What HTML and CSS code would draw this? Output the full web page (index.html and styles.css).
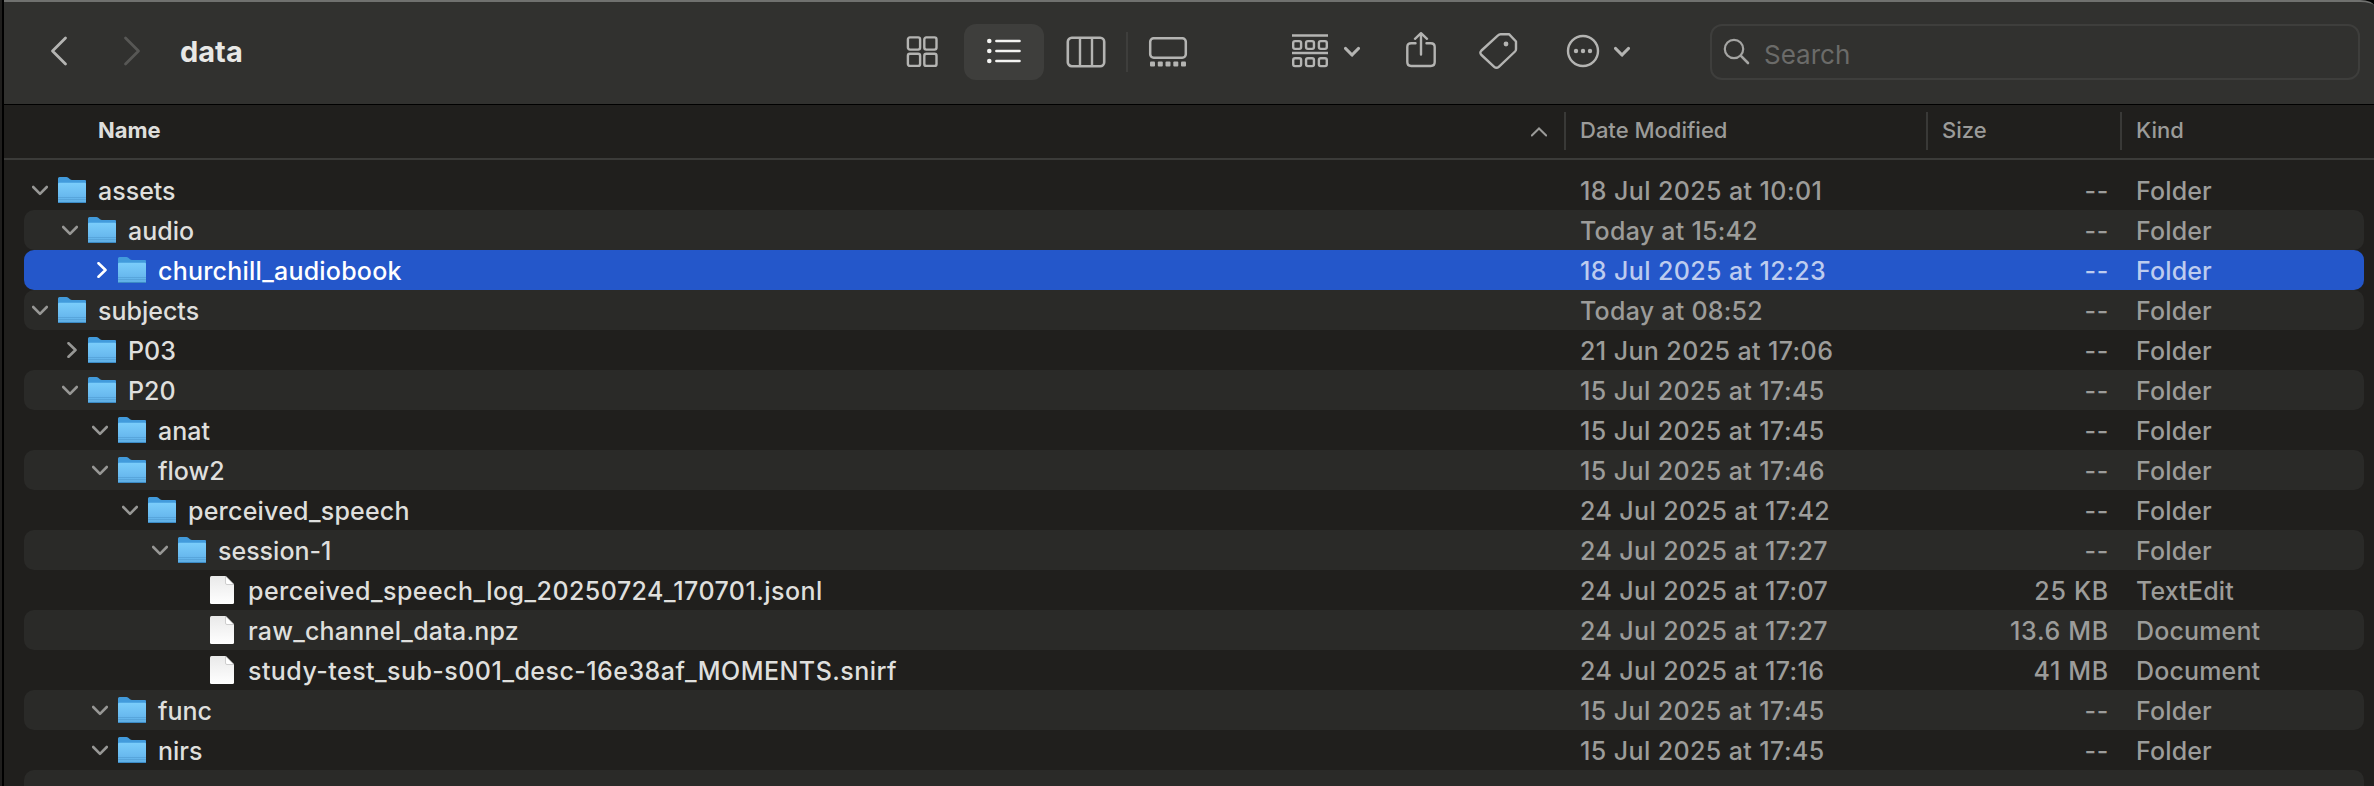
FILE: index.html
```html
<!DOCTYPE html>
<html lang="en">
<head>
<meta charset="utf-8">
<title>data</title>
<link rel="stylesheet" href="styles.css">
</head>
<body>
<svg class="defs" width="0" height="0" aria-hidden="true">
  <defs>
    <linearGradient id="folder-front" x1="0" y1="0" x2="0" y2="1"><stop offset="0" stop-color="#7bcdfb"/><stop offset=".7" stop-color="#67b8ee"/><stop offset="1" stop-color="#5eaee4"/></linearGradient>
    <linearGradient id="page-fill" x1="0" y1="0" x2="0" y2="1"><stop offset="0" stop-color="#e9e9e9"/><stop offset="1" stop-color="#fff"/></linearGradient>
  </defs>
  <symbol id="down" viewBox="0 0 16 16"><path d="M1.200 5 8 11.800 14.800 5" fill="none" stroke="currentColor" stroke-width="2.600" stroke-linecap="round" stroke-linejoin="round"/></symbol>
  <symbol id="right" viewBox="0 0 16 16"><path d="M6.500 1.200 13.500 8 6.500 14.800" fill="none" stroke="currentColor" stroke-width="2.600" stroke-linecap="round" stroke-linejoin="round"/></symbol>
  <symbol id="folder" viewBox="0 0 28 27"><path d="M0 1.500Q0 0 1.500 0H8.500Q9.500 0 10.300 .7L12 2.200Q12.800 3 14 3H27Q28 3 28 4V12H0Z" fill="#429bdc"/><path d="M0 6.800Q0 5.700 1.200 5.700H26.800Q28 5.700 28 6.800V25Q28 26 27 26H1Q0 26 0 25Z" fill="url(#folder-front)"/><path d="M0 20.500H28M0 22.500H28" stroke="#529fd4" stroke-width=".7"/><path d="M.2 25.500H27.800" stroke="#3b8bc6" stroke-width="1"/></symbol>
  <symbol id="page" viewBox="0 0 24 28"><path d="M1.500 0H15.500L24 8.500V26.500Q24 28 22.500 28H1.500Q0 28 0 26.500V1.500Q0 0 1.500 0Z" fill="url(#page-fill)"/><path d="M15.500 0V7Q15.500 8.500 17 8.500H24Z" fill="#fff" stroke="#bbb" stroke-width=".7"/></symbol>
</svg>
<div class="window">
  <header class="toolbar">
    <div class="nav">
      <svg class="back" width="20" height="32" viewBox="0 0 20 32"><path d="M16.500 3 3.500 16 16.500 29" /></svg>
      <svg class="forward" width="20" height="32" viewBox="0 0 20 32"><path d="M2.500 3 15.500 16 2.500 29" /></svg>
      <h1>data</h1>
    </div>
    <div class="views">
      <span class="view"><svg width="32" height="32" viewBox="0 0 32 32"><g fill="none" stroke="currentColor" stroke-width="2.400"><rect x="1.900" y="1.400" width="12.200" height="12.200" rx="2"/><rect x="18.300" y="1.400" width="12.200" height="12.200" rx="2"/><rect x="1.900" y="17.700" width="12.200" height="12.200" rx="2"/><rect x="18.300" y="17.700" width="12.200" height="12.200" rx="2"/></g></svg></span>
      <span class="view active"><svg width="34" height="26" viewBox="0 0 34 26"><g fill="currentColor"><circle cx="2.300" cy="3" r="2.300"/><circle cx="2.300" cy="13" r="2.300"/><circle cx="2.300" cy="23" r="2.300"/></g><path d="M9.400 3H32.500M9.400 13H32.500M9.400 23H32.500" stroke="currentColor" stroke-width="2.600" stroke-linecap="round"/></svg></span>
      <span class="view"><svg width="40" height="32" viewBox="0 0 40 32"><g fill="none" stroke="currentColor"><rect x="1.800" y="1.800" width="36.400" height="28.400" rx="4" stroke-width="2.600"/><path d="M14 2V30M26 2V30" stroke-width="2.400"/></g></svg></span>
      <span class="view gallery"><svg width="40" height="30" viewBox="0 0 40 30"><rect x="2.200" y="1.300" width="35.600" height="19.400" rx="3.500" fill="none" stroke="currentColor" stroke-width="2.500"/><g fill="currentColor"><rect x="2" y="24.500" width="5" height="5" rx="1"/><rect x="9.800" y="24.500" width="5" height="5" rx="1"/><rect x="17.500" y="24.500" width="5" height="5" rx="1"/><rect x="25.300" y="24.500" width="5" height="5" rx="1"/><rect x="33" y="24.500" width="5" height="5" rx="1"/></g></svg></span>
    </div>
    <div class="actions">
      <svg width="36" height="34" viewBox="0 0 36 34"><g fill="none" stroke="currentColor" stroke-width="2.400"><path d="M0 1.500H36M0 19H36"/><rect x="1.200" y="7.100" width="7.900" height="7.800" rx="1.800"/><rect x="14.050" y="7.100" width="7.900" height="7.800" rx="1.800"/><rect x="26.900" y="7.100" width="7.900" height="7.800" rx="1.800"/><rect x="1.200" y="24.300" width="7.900" height="7.800" rx="1.800"/><rect x="14.050" y="24.300" width="7.900" height="7.800" rx="1.800"/><rect x="26.900" y="24.300" width="7.900" height="7.800" rx="1.800"/></g></svg>
      <svg class="menu-arrow" width="16" height="12" viewBox="0 0 16 12"><path d="M1.600 2.500 8 9 14.400 2.500"/></svg>
      <svg class="share" width="30" height="36" viewBox="0 0 30 36"><g fill="none" stroke="currentColor" stroke-width="2.400" stroke-linecap="round" stroke-linejoin="round"><path d="M9.500 11.200H5.200Q1.300 11.200 1.300 15V30Q1.300 34 5.200 34H24.800Q28.700 34 28.700 30V15Q28.700 11.200 24.800 11.200H20.500"/><path d="M15 22.500V1.500M9 6.800 15 1.200 21 6.800"/></g></svg>
      <svg class="tag" width="40" height="38" viewBox="0 0 40 38"><path d="M21.500 2.200H30L37 9.500V17.300Q37 18.500 36 19.500L19.800 34.800Q17.500 36.900 15.200 34.800L2.500 23Q.2 20.800 2.500 18.500L19 3.400Q20.200 2.200 21.500 2.200Z" fill="none" stroke="currentColor" stroke-width="2.400" stroke-linejoin="round"/><circle cx="27" cy="12" r="2.400" fill="currentColor"/></svg>
      <svg class="more" width="34" height="34" viewBox="0 0 34 34"><circle cx="17" cy="17" r="15" fill="none" stroke="currentColor" stroke-width="2.400"/><g fill="currentColor"><circle cx="10" cy="17" r="2.200"/><circle cx="17" cy="17" r="2.200"/><circle cx="24" cy="17" r="2.200"/></g></svg>
      <svg class="menu-arrow last" width="16" height="12" viewBox="0 0 16 12"><path d="M1.600 2.500 8 9 14.400 2.500"/></svg>
    </div>
    <div class="search"><svg width="28" height="28" viewBox="0 0 28 28"><g fill="none" stroke="currentColor" stroke-width="2.200" stroke-linecap="round"><circle cx="11" cy="11" r="9.200"/><path d="M17.700 17.700 25 25" stroke-width="2.600"/></g></svg><span>Search</span></div>
  </header>
  <div class="columns">
    <div class="head name"><b>Name</b><svg class="sort" width="16" height="10" viewBox="0 0 16 10"><path d="M.8 8.500 8 1.500 15.200 8.500"/></svg></div>
    <div class="head date">Date Modified</div>
    <div class="head size">Size</div>
    <div class="head kind">Kind</div>
  </div>
  <main class="rows">
    <div class="row"><div class="item d0"><svg class="arrow"><use href="#down"/></svg><svg class="folder"><use href="#folder"/></svg><span>assets</span></div><span class="when">18 Jul 2025 at 10:01</span><span class="bytes">--</span><span class="type">Folder</span></div>
    <div class="row"><div class="item d1"><svg class="arrow"><use href="#down"/></svg><svg class="folder"><use href="#folder"/></svg><span>audio</span></div><span class="when today">Today at 15:42</span><span class="bytes">--</span><span class="type">Folder</span></div>
    <div class="row selected"><div class="item d2 long"><svg class="arrow"><use href="#right"/></svg><svg class="folder"><use href="#folder"/></svg><span>churchill_audiobook</span></div><span class="when">18 Jul 2025 at 12:23</span><span class="bytes">--</span><span class="type">Folder</span></div>
    <div class="row"><div class="item d0"><svg class="arrow"><use href="#down"/></svg><svg class="folder"><use href="#folder"/></svg><span>subjects</span></div><span class="when today">Today at 08:52</span><span class="bytes">--</span><span class="type">Folder</span></div>
    <div class="row"><div class="item d1"><svg class="arrow"><use href="#right"/></svg><svg class="folder"><use href="#folder"/></svg><span>P03</span></div><span class="when">21 Jun 2025 at 17:06</span><span class="bytes">--</span><span class="type">Folder</span></div>
    <div class="row"><div class="item d1"><svg class="arrow"><use href="#down"/></svg><svg class="folder"><use href="#folder"/></svg><span>P20</span></div><span class="when">15 Jul 2025 at 17:45</span><span class="bytes">--</span><span class="type">Folder</span></div>
    <div class="row"><div class="item d2"><svg class="arrow"><use href="#down"/></svg><svg class="folder"><use href="#folder"/></svg><span>anat</span></div><span class="when">15 Jul 2025 at 17:45</span><span class="bytes">--</span><span class="type">Folder</span></div>
    <div class="row"><div class="item d2"><svg class="arrow"><use href="#down"/></svg><svg class="folder"><use href="#folder"/></svg><span>flow2</span></div><span class="when">15 Jul 2025 at 17:46</span><span class="bytes">--</span><span class="type">Folder</span></div>
    <div class="row"><div class="item d3 long"><svg class="arrow"><use href="#down"/></svg><svg class="folder"><use href="#folder"/></svg><span>perceived_speech</span></div><span class="when">24 Jul 2025 at 17:42</span><span class="bytes">--</span><span class="type">Folder</span></div>
    <div class="row"><div class="item d4"><svg class="arrow"><use href="#down"/></svg><svg class="folder"><use href="#folder"/></svg><span>session-1</span></div><span class="when">24 Jul 2025 at 17:27</span><span class="bytes">--</span><span class="type">Folder</span></div>
    <div class="row"><div class="item d5 longest"><svg class="page"><use href="#page"/></svg><span>perceived_speech_log_20250724_170701.jsonl</span></div><span class="when">24 Jul 2025 at 17:07</span><span class="bytes">25 KB</span><span class="type">TextEdit</span></div>
    <div class="row"><div class="item d5 long"><svg class="page"><use href="#page"/></svg><span>raw_channel_data.npz</span></div><span class="when">24 Jul 2025 at 17:27</span><span class="bytes">13.6 MB</span><span class="type">Document</span></div>
    <div class="row"><div class="item d5 longest"><svg class="page"><use href="#page"/></svg><span>study-test_sub-s001_desc-16e38af_MOMENTS.snirf</span></div><span class="when">24 Jul 2025 at 17:16</span><span class="bytes">41 MB</span><span class="type">Document</span></div>
    <div class="row"><div class="item d2"><svg class="arrow"><use href="#down"/></svg><svg class="folder"><use href="#folder"/></svg><span>func</span></div><span class="when">15 Jul 2025 at 17:45</span><span class="bytes">--</span><span class="type">Folder</span></div>
    <div class="row"><div class="item d2"><svg class="arrow"><use href="#down"/></svg><svg class="folder"><use href="#folder"/></svg><span>nirs</span></div><span class="when">15 Jul 2025 at 17:45</span><span class="bytes">--</span><span class="type">Folder</span></div>
    <div class="row"></div>
  </main>
</div>
</body>
</html>
```
FILE: styles.css
```css
* { box-sizing: border-box; }
body { margin: 0; background: #000; font-family: Inter, "Liberation Sans", sans-serif; overflow: hidden; }
svg { display: block; flex: none; }
.defs { position: absolute; }
.window { height: 786px; border-left: 2px solid #1f1e1d; background: linear-gradient(#000 20px, #201f1d 20px); box-shadow: inset 2px 0 #000; padding-left: 2px; overflow: hidden; }
.toolbar { height: 105px; padding-bottom: 1px; background: #31312f; border-top: 2px solid #70716f; border-bottom: 1px solid #000; border-top-right-radius: 14px 6px; display: flex; align-items: flex-start; color: #b4b4b2; }
.nav { display: flex; width: 886px; padding: 33px 0 0 45px; }
.nav path { fill: none; stroke: currentColor; stroke-width: 2.8; stroke-linecap: round; stroke-linejoin: round; }
.forward { margin-left: 54px; color: #575755; }
h1 { margin: 1px 0 0 37px; font-size: 29px; line-height: 32px; font-weight: 700; color: #e8e8e6; }
.views { display: flex; gap: 2px; padding-top: 22px; width: 397px; }
.view { width: 80px; height: 56px; display: flex; align-items: center; justify-content: center; border-radius: 12px; }
.active { background: #3e3e3c; color: #f4f4f2; }
.active svg { margin-top: -2px; }
.views .view:first-child { width: 64px; margin-right: 8px; }
.gallery { position: relative; }
.gallery::before { content: ""; position: absolute; left: -2px; top: 8px; width: 2px; height: 40px; background: #3e3e3c; }
.actions { display: flex; align-items: center; width: 423px; height: 98px; padding-left: 5px; }
.menu-arrow { margin: 2px 0 0 16px; }
.menu-arrow.last { margin-left: 14px; }
.menu-arrow path { fill: none; stroke: currentColor; stroke-width: 3.2; stroke-linecap: round; stroke-linejoin: round; }
.share { margin: 0 0 2px 46px; }
.tag { margin-left: 43px; }
.more { margin-left: 47px; }
.search { width: 650px; height: 56px; margin-top: 22px; border: 2px solid #3e3e3c; border-radius: 12px; display: flex; align-items: center; padding-left: 11px; gap: 13px; font-size: 26px; color: #6b6b69; }
.search svg { color: #a5a5a3; }
.search span { padding-top: 4px; }
.columns { display: flex; height: 55px; border-bottom: 2px solid #3b3b39; align-items: center; font-size: 22px; font-weight: 500; color: #9b9b99; }
.head { height: 38px; line-height: 36px; border-left: 2px solid #393937; padding-left: 14px; margin-bottom: 2px; }
.head.name { width: 1560px; border: 0; padding: 0 17px 0 94px; display: flex; justify-content: space-between; align-items: center; color: #dededc; }
.head b { font-weight: 700; margin-top: -2px; }
.sort { margin-top: 2px; }
.sort path { fill: none; stroke: #9b9b99; stroke-width: 2; stroke-linecap: round; }
.head.date { width: 362px; }
.head.size { width: 194px; }
.rows { padding: 10px 10px 0 20px; font-size: 25px; font-weight: 500; }
.row { height: 40px; border-radius: 10px; display: flex; align-items: center; color: #9c9c9a; }
.row:nth-child(even) { background: #2a2a28; }
.row.selected { background: #2457ca; color: #bdccef; }
.row span { padding-top: 2px; }
.item { width: 1556px; display: flex; align-items: center; color: #dfdfdd; }
.selected .item { color: #fff; }
.arrow { width: 16px; height: 16px; color: #979795; }
.selected .arrow { color: #fff; }
.folder { width: 28px; height: 27px; margin: 1px 12px 0 10px; }
.page { width: 24px; height: 28px; margin: 0 14px 0 0; }
.d0 { padding-left: 8px; }
.d1 { padding-left: 38px; }
.d2 { padding-left: 68px; }
.d3 { padding-left: 98px; }
.d4 { padding-left: 128px; }
.d5 { padding-left: 186px; }
.long { letter-spacing: .22px; }
.longest { letter-spacing: .45px; }
.when { width: 362px; letter-spacing: .4px; }
.when.today { letter-spacing: .25px; }
.bytes { width: 167px; text-align: right; letter-spacing: .7px; }
.type { margin-left: 27px; letter-spacing: .15px; }
```
